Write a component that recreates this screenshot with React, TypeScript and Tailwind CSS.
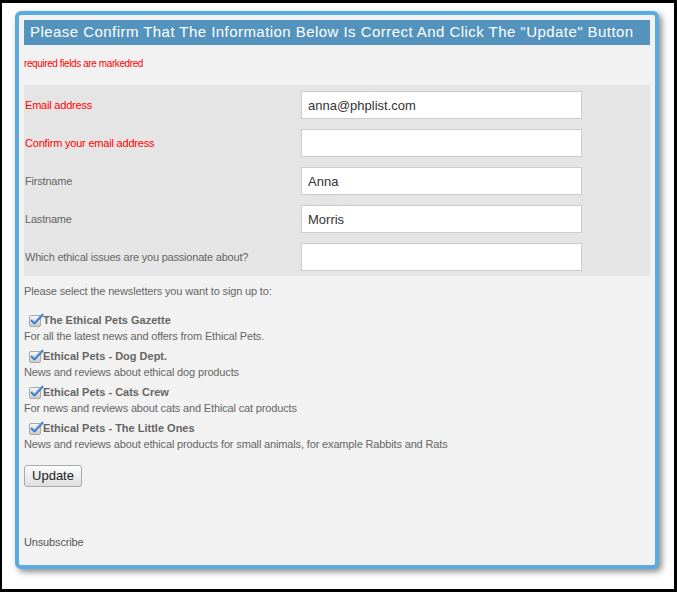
import React from 'react';

const fields: { label: string; value: string; required?: boolean }[] = [
  { label: 'Email address', value: 'anna@phplist.com', required: true },
  { label: 'Confirm your email address', value: '', required: true },
  { label: 'Firstname', value: 'Anna' },
  { label: 'Lastname', value: 'Morris' },
  { label: 'Which ethical issues are you passionate about?', value: '' },
];

const lists = [
  { title: 'The Ethical Pets Gazette', desc: 'For all the latest news and offers from Ethical Pets.' },
  { title: 'Ethical Pets - Dog Dept.', desc: 'News and reviews about ethical dog products' },
  { title: 'Ethical Pets - Cats Crew', desc: 'For news and reviews about cats and Ethical cat products' },
  { title: 'Ethical Pets - The Little Ones', desc: 'News and reviews about ethical products for small animals, for example Rabbits and Rats' },
];

const CheckIcon: React.FC = () => (
  <svg width="15" height="14" viewBox="0 0 15 14" className="shrink-0">
    <defs>
      <linearGradient id="cb" x1="0" y1="0" x2="0" y2="1">
        <stop offset="0" stopColor="#fafafa" />
        <stop offset="1" stopColor="#c9c9c9" />
      </linearGradient>
    </defs>
    <rect x="0.5" y="2.5" width="11" height="11" rx="1.5" fill="url(#cb)" stroke="#a8a8a8" />
    <path d="M2.8 7.6 L5.5 10.3 L13.5 1.8" fill="none" stroke="#3574c8" strokeWidth="2.2" strokeLinecap="round" strokeLinejoin="round" />
    <path d="M3.2 7.2 L5.5 9.5 L13 1.4" fill="none" stroke="#8ab8ee" strokeWidth="0.7" strokeLinecap="round" />
  </svg>
);

export default function App() {
  return (
    <div
      className="w-[677px] h-[592px] bg-white border-t-[3px] border-b-[3px] border-l-2 border-r-[3px] border-black overflow-hidden"
      style={{ fontFamily: '"Liberation Sans", Arial, sans-serif' }}
    >
      <div className="ml-[13px] mt-[8px] w-[644px] h-[558px] border-4 border-[#5aace0] rounded-[6px] bg-[#f2f2f2] px-[5px] pt-[5px] shadow-[3px_3px_6px_rgba(0,0,0,0.45)]">
        {/* Header */}
        <div className="h-[25px] bg-[#5493be] text-white text-[15px] leading-[24px] pl-[6px] tracking-[0.45px] whitespace-nowrap overflow-hidden">
          Please Confirm That The Information Below Is Correct And Click The "Update" Button
        </div>

        <div className="mt-[13px] mb-[15px] text-[10px] leading-[12px] text-[#ff0000] tracking-[-0.4px]">
          required fields are markedred
        </div>

        {/* Fields */}
        <div className="bg-[#e5e5e5] pt-[6px] pb-[5px] flex flex-col gap-[10px]">
          {fields.map((f) => (
            <div key={f.label} className="flex items-center h-[28px]">
              <div
                className={`w-[277px] pl-[1px] text-[11px] leading-[14px] pb-[1px] tracking-[-0.2px] ${f.required ? 'text-[#ff0000]' : 'text-[#666666]'}`}
              >
                {f.label}
              </div>
              <input
                readOnly
                value={f.value}
                className="w-[281px] h-[28px] bg-white border border-[#cccccc] px-[6px] text-[13px] text-[#333333] outline-none"
                style={{ fontFamily: '"Liberation Sans", Arial, sans-serif' }}
              />
            </div>
          ))}
        </div>

        <div className="mt-[7px] text-[11px] leading-[16px] text-[#666666] tracking-[-0.15px]">
          Please select the newsletters you want to sign up to:
        </div>

        <div className="mt-[13px] flex flex-col gap-[4px]">
          {lists.map((l) => (
            <div key={l.title}>
              <div className="flex items-center h-[16px] pl-[5px]">
                <CheckIcon />
                <span className="text-[11px] font-bold text-[#666666] leading-[16px] -ml-[1px]">{l.title}</span>
              </div>
              <div className="text-[11px] leading-[16px] text-[#666666] tracking-[-0.15px]">{l.desc}</div>
            </div>
          ))}
        </div>

        <button
          className="mt-[13px] w-[58px] h-[22px] border border-[#aaaaaa] rounded-[3px] bg-gradient-to-b from-[#fdfdfd] to-[#dedede] text-[13px] text-[#222222] leading-[20px]"
          style={{ fontFamily: '"Liberation Sans", Arial, sans-serif' }}
        >
          Update
        </button>

        <div className="mt-[47px] text-[11px] leading-[16px] text-[#555555] tracking-[-0.15px]">Unsubscribe</div>
      </div>
    </div>
  );
}
